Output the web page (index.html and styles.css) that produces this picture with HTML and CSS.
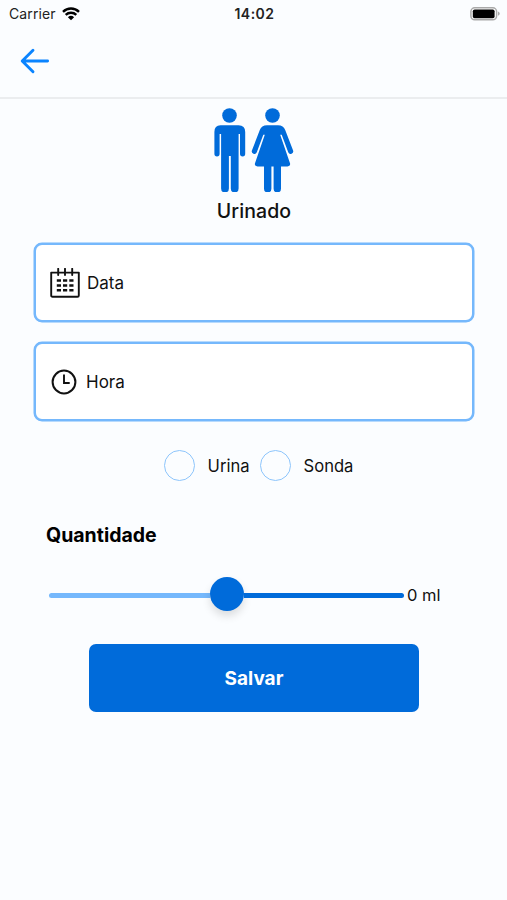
FILE: index.html
```html
<!DOCTYPE html>
<html lang="pt-BR">
<head>
  <meta charset="UTF-8">
  <meta name="viewport" content="width=device-width, initial-scale=1.0">
  <title>Urinado</title>
  <link rel="stylesheet" href="styles.css">
</head>
<body>
  <div class="status-bar">
    <div class="carrier">
      <span>Carrier</span>
      <svg class="wifi" viewBox="0 0 18 14" width="18" height="14">
        <path d="M1 4.8a11.5 11.5 0 0 1 16 0M3.7 7.9a7.6 7.6 0 0 1 10.6 0" fill="none" stroke="#000" stroke-width="2.4"/>
        <path d="M9 13.3 5.9 10.2a4.5 4.5 0 0 1 6.2 0z"/>
      </svg>
    </div>
    <div class="time">14:02</div>
    <svg class="battery" viewBox="0 0 30 14" width="30" height="14">
      <rect x="0.9" y="0.8" width="25.7" height="12" rx="3.8" fill="#fff" stroke="#a9a9a9" stroke-width="1.5"/>
      <rect x="2.8" y="2.4" width="21.8" height="8.8" rx="1.8"/>
      <path d="M28 4.4c2.3.8 2.3 3.6 0 4.4z" fill="#a9a9a9"/>
    </svg>
  </div>
  <header class="nav">
    <button class="back" aria-label="Voltar">
      <svg viewBox="0 0 30 26" width="30" height="26">
        <path d="M13 2.2 2.2 13 13 23.8M2.6 13h25" fill="none" stroke="#0a84ff" stroke-width="2.9" stroke-linecap="round" stroke-linejoin="round"/>
      </svg>
    </button>
  </header>
  <main class="content">
    <svg class="people" viewBox="0 0 80 84" width="80" height="84">
      <circle cx="15.5" cy="7.5" r="7.3"/>
      <path d="M6.5 17.3h18q6.7 0 6.7 6.7v21.8a2.6 2.6 0 0 1-5.2 0V26h-1.4v54.5a3.9 3.9 0 0 1-7.8 0V48h-1.9v32.5a3.9 3.9 0 0 1-7.8 0V26H5.6v19.8a2.6 2.6 0 0 1-5.2 0V24q0-6.7 6.1-6.7z"/>
      <circle cx="58.5" cy="7.5" r="7.3"/>
      <path d="M53 17.3h11q5.5 0 7.2 4.8l7.8 20.2a2.5 2.5 0 0 1-4.8 2l-6.5-17.5h-1.5L76 55.2q.8 3.2-2.5 3.2H67v22.3a3.7 3.7 0 0 1-7.4 0V58.4h-2.2v22.3a3.7 3.7 0 0 1-7.4 0V58.4h-6.500q-3.300 0-2.500-3.200l9.800-28.400h-1.500l-6.500 17.500a2.500 2.500 0 0 1-4.800-2l7.800-20.200q1.700-4.800 7.200-4.800z"/>
    </svg>
    <h1>Urinado</h1>
    <div class="field">
      <svg class="calendar" viewBox="0 0 30 30" width="30" height="30">
        <path d="M1.2 4.6h27.6v22.8q0 1.3-1.3 1.3h-25q-1.3 0-1.3-1.3zM8.2.8v6.2M15 .8v6.2M22.2.8v6.2" fill="none" stroke="#111" stroke-width="1.9" stroke-linecap="round" stroke-linejoin="round"/>
        <path d="M6.8 12.5h4.200M13 12.5h4.200M19.300 12.5h4.200M6.800 17.500h4.200M13 17.500h4.200M19.300 17.500h4.200M6.800 22.300h4.200M13 22.300h4.200M19.300 22.300h4.200" stroke="#111" stroke-width="2.6"/>
      </svg>
      <span>Data</span>
    </div>
    <div class="field">
      <svg class="clock" viewBox="0 0 26 26" width="26" height="26">
        <path d="M13 5.5V14h5.700" fill="none" stroke="#111" stroke-width="1.9"/>
        <circle cx="13" cy="13" r="11.4" fill="none" stroke="#111" stroke-width="2"/>
      </svg>
      <span>Hora</span>
    </div>
    <div class="options">
      <label class="option"><input type="radio" name="tipo">Urina</label>
      <label class="option"><input type="radio" name="tipo">Sonda</label>
    </div>
    <h2>Quantidade</h2>
    <div class="amount">
      <div class="slider">
        <div class="track filled"></div>
        <div class="thumb"></div>
        <div class="track"></div>
      </div>
      <span>0 ml</span>
    </div>
    <button class="save">Salvar</button>
  </main>
</body>
</html>
```
FILE: styles.css
```css
* {
  box-sizing: border-box;
}

body {
  margin: 0;
  height: 900px;
  background: #fbfdff;
  color: #111;
  font-family: Inter, sans-serif;
  font-size: 17px;
}

button {
  border: none;
  background: none;
  padding: 0;
  cursor: pointer;
}

svg {
  display: block;
}

.status-bar {
  display: grid;
  grid-template-columns: 1fr auto 1fr;
  align-items: center;
  height: 27px;
  padding: 0 7px 0 9px;
  font-size: 14px;
  letter-spacing: 0.1px;
  color: #222;
}

.carrier {
  display: flex;
  align-items: center;
  gap: 6px;
}

.time {
  font-weight: 600;
  letter-spacing: 0.5px;
}

.battery {
  justify-self: end;
}

.nav {
  display: flex;
  align-items: center;
  height: 72px;
  padding: 0 20px 2px;
  border-bottom: 2px solid #ebedef;
}

.content {
  display: flex;
  flex-direction: column;
  padding: 9px 33px 0 34px;
}

.people {
  align-self: center;
  fill: #006bda;
}

h1 {
  margin: 7px 0 19px;
  font-size: 19.5px;
  line-height: 25px;
  font-weight: 450;
  letter-spacing: 0.1px;
  text-align: center;
}

.field {
  display: flex;
  align-items: center;
  height: 79px;
  margin-bottom: 20px;
  padding-left: 14px;
  border: 2px solid #75b8fc;
  border-radius: 8px;
  background: #fff;
  box-shadow: 0 0 0 0.5px #75b8fc;
}

.calendar {
  margin-right: 7px;
}

.clock {
  margin: 0 9px 0 1px;
}

.options {
  display: flex;
  justify-content: center;
  gap: 10px;
  margin-top: 9px;
  padding-left: 9px;
}

.option {
  display: flex;
  align-items: center;
  gap: 13px;
  font-size: 16.6px;
}

.option input {
  appearance: none;
  width: 31px;
  height: 31px;
  margin: 0;
  border: 1.5px solid #8dc5fc;
  border-radius: 50%;
}

h2 {
  margin: 42px 0 0 12px;
  font-size: 19.5px;
  line-height: 24px;
  font-weight: 700;
  color: #000;
}

.amount {
  display: flex;
  align-items: center;
  gap: 3px;
  margin-top: 30px;
  padding-left: 15px;
}

.amount span {
  margin-top: 2px;
  font-size: 16.5px;
}

.slider {
  display: flex;
  align-items: center;
  width: 355px;
}

.track {
  flex: 1;
  height: 5px;
  margin-top: 2px;
  border-radius: 0 3px 3px 0;
  background: #006bda;
}

.track.filled {
  border-radius: 3px 0 0 3px;
  background: #75b8fc;
}

.thumb {
  width: 34px;
  height: 34px;
  border-radius: 50%;
  background: #006bda;
  box-shadow: 0 5px 8px rgba(0, 0, 0, 0.13);
}

.save {
  align-self: center;
  width: 330px;
  height: 68px;
  margin-top: 33px;
  border-radius: 7px;
  background: #006bda;
  color: #fff;
  font-family: inherit;
  font-size: 19px;
  font-weight: 700;
}
```
